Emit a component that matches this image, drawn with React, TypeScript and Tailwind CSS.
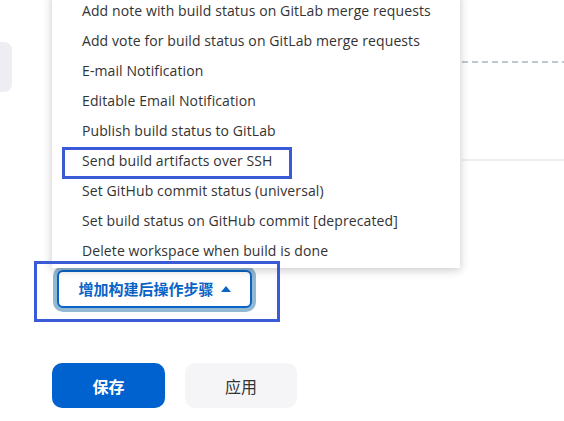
import { useState } from "react";

const steps = [
  "Add note with build status on GitLab merge requests",
  "Add vote for build status on GitLab merge requests",
  "E-mail Notification",
  "Editable Email Notification",
  "Publish build status to GitLab",
  "Send build artifacts over SSH",
  "Set GitHub commit status (universal)",
  "Set build status on GitHub commit [deprecated]",
  "Delete workspace when build is done",
];

const App = () => {
  const [open] = useState(true);

  return (
    <div className="relative h-[421px] w-[564px] overflow-hidden bg-white font-['Open_Sans','Noto_Sans_CJK_SC',sans-serif]">
      {/* Page behind the menu */}
      <div className="flex h-[270px]">
        <div className="mt-[42px] h-[50px] w-[12px] rounded-r-lg bg-[#ededf2]" />
        <div className="flex-1 pl-[450px]">
          <div className="mt-[61px] h-[2px] bg-[linear-gradient(to_right,#bdc7cc_6px,transparent_6px)] bg-[length:10px_2px]" />
          <div className="mt-[96px] h-[2px] bg-[#efeff3]" />
        </div>
      </div>

      {/* Add post-build step */}
      <div className="pl-[57px]">
        <button className="flex h-[38px] w-[195px] items-center justify-center gap-[7px] rounded-[6px] border-2 border-[#0a63c6] bg-white shadow-[0_0_0_4px_#92b8d2] font-['Noto_Sans_CJK_SC',sans-serif] text-[15px] font-bold text-[#0a63c6]">
          增加构建后操作步骤
          <svg width="10" height="6" viewBox="0 0 10 6">
            <polygon points="0,6 5,0 10,6" fill="#0a63c6" />
          </svg>
        </button>
      </div>

      {/* Footer */}
      <div className="mt-[55px] flex gap-5 pl-[52px] font-['Noto_Sans_CJK_SC',sans-serif] text-[16px]">
        <button className="h-[45px] w-[113px] rounded-[10px] bg-[#0062cf] font-bold text-white">保存</button>
        <button className="h-[45px] w-[112px] rounded-[10px] bg-[#f5f5f7] text-[#333]">应用</button>
      </div>

      {/* Dropdown menu */}
      {open && (
        <ul className="absolute left-[52px] top-[-7px] w-[408px] bg-white pb-[3px] pt-[2px] shadow-[0_2px_9px_rgba(0,0,0,0.22)]">
          {steps.map((s) => (
            <li key={s} className="flex h-[30px] items-center pl-[30px] text-[14px] tracking-[0.1px] text-[#333]">
              {s}
            </li>
          ))}
        </ul>
      )}

      {/* Annotation boxes */}
      <div className="absolute left-[62px] top-[147px] h-[32px] w-[230px] border-[3px] border-[#3a5ad8]" />
      <div className="absolute left-[34px] top-[261px] h-[61px] w-[246px] border-[3px] border-[#3a5ad8]" />
    </div>
  );
};

export default App;
